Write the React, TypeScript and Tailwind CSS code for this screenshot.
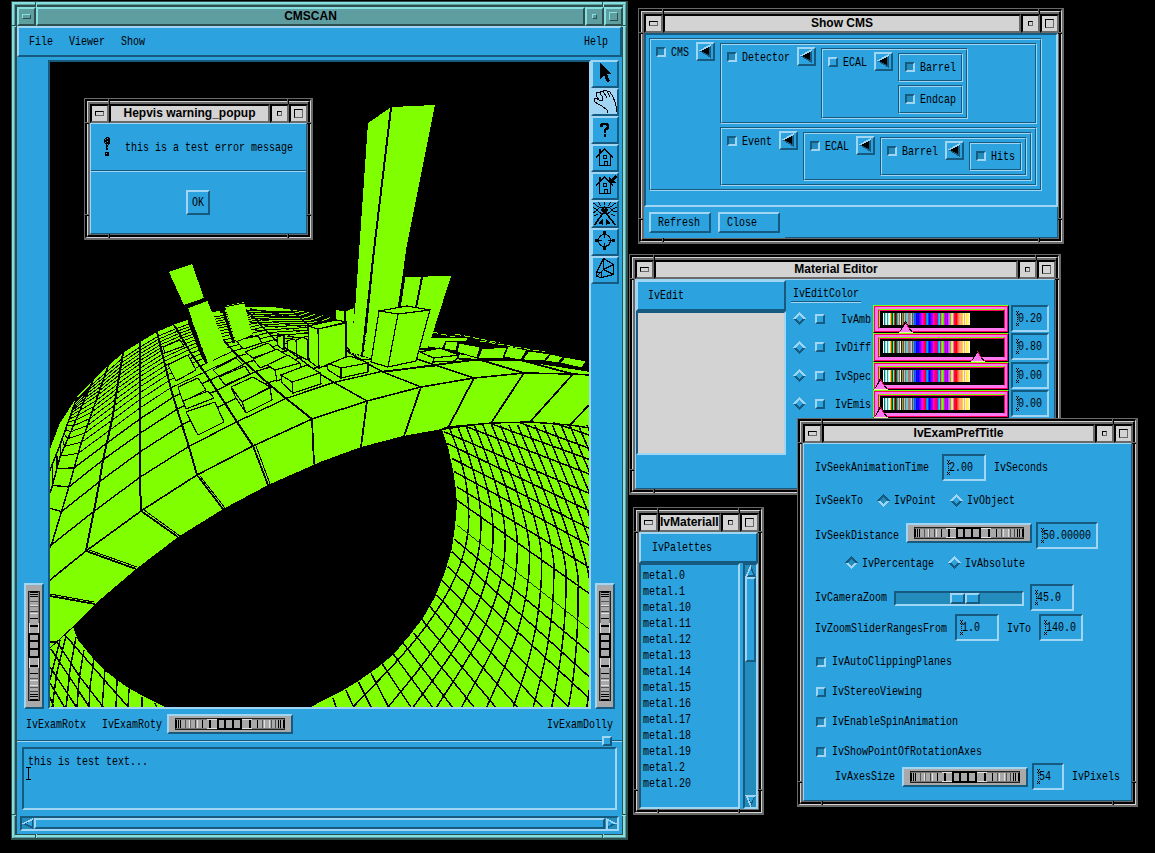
import React from "react";

type Pt = [number, number];
type Kids = { children?: React.ReactNode };

const raised = "border-2 border-t-[#a0d6f4] border-l-[#a0d6f4] border-b-[#165a80] border-r-[#165a80]";
const sunken = "border-2 border-t-[#165a80] border-l-[#165a80] border-b-[#a0d6f4] border-r-[#a0d6f4]";

/* Terminal-style label: six pixels per character. */
function T({ s, className = "" }: { s: string; className?: string }) {
  return (
    <span className={"block h-[13px] shrink-0 whitespace-pre " + className} style={{ width: s.length * 6 }}>
      <span className="block w-max origin-left scale-x-[0.769] font-['Liberation_Mono',monospace] text-[13px] leading-[13px] text-black">
        {s}
      </span>
    </span>
  );
}

/* ---------- window frame ---------- */

function Notches({ teal }: { teal?: boolean }) {
  const v = teal ? "border-l-[#2f4f4f] border-r-[#86e0e0]" : "border-l-[#696969] border-r-black";
  const h = teal ? "border-t-[#2f4f4f] border-b-[#86e0e0]" : "border-t-[#696969] border-b-black";
  return (
    <>
      <i className={"absolute left-[23px] top-0 h-[5px] w-[2px] border-l border-r " + v} />
      <i className={"absolute right-[22px] top-0 h-[5px] w-[2px] border-l border-r " + v} />
      <i className={"absolute bottom-0 left-[23px] h-[4px] w-[2px] border-l border-r " + v} />
      <i className={"absolute bottom-0 right-[22px] h-[4px] w-[2px] border-l border-r " + v} />
      <i className={"absolute left-0 top-[23px] h-[2px] w-[4px] border-b border-t " + h} />
      <i className={"absolute right-0 top-[23px] h-[2px] w-[4px] border-b border-t " + h} />
      <i className={"absolute bottom-[22px] left-0 h-[2px] w-[4px] border-b border-t " + h} />
      <i className={"absolute bottom-[22px] right-0 h-[2px] w-[4px] border-b border-t " + h} />
    </>
  );
}

function Win({ title, pos, teal, left, children }: Kids & { title: string; pos: string; teal?: boolean; left?: boolean }) {
  const a = teal ? "border-[#2f4f4f]" : "border-[#696969]";
  const b = teal
    ? "border-t-[#86e0e0] border-l-[#86e0e0] border-b-[#5f9ea0] border-r-[#5f9ea0]"
    : "border-t-black border-l-black border-b-[#d3d3d3] border-r-[#d3d3d3]";
  const c = teal
    ? "border-t-[#5f9ea0] border-l-[#5f9ea0] border-b-[#86e0e0] border-r-[#86e0e0]"
    : "border-t-[#d3d3d3] border-l-[#d3d3d3] border-b-black border-r-black";
  const btn = teal
    ? "bg-[#5f9ea0] border-t-[#86e0e0] border-l-[#86e0e0] border-b-[#2f4f4f] border-r-[#2f4f4f]"
    : "bg-[#d3d3d3] border-t-black border-l-black border-b-[#696969] border-r-[#696969]";
  const cell = "flex h-[19px] w-[19px] shrink-0 items-center justify-center border-2 " + btn;
  return (
    <div className={"absolute border-b-2 border-l border-r-2 border-t " + a + " " + pos}>
      <div className={"h-full border-b border-l-2 border-r border-t-2 " + b}>
        <div className={"h-full border-b-2 border-l border-r-2 border-t " + c}>
          <div className={"flex h-full flex-col border-b border-l-2 border-r border-t-2 " + a}>
            <div className="-mr-px flex h-[19px] shrink-0">
              <div className={cell}>
                <i className={"h-[5px] w-[9px] border " + btn} />
              </div>
              <div
                className={
                  "flex h-[19px] min-w-0 flex-1 overflow-hidden whitespace-nowrap border-2 font-['Liberation_Sans',sans-serif] text-[12px] font-bold leading-[14px] text-black " +
                  (left ? "justify-start " : "justify-center ") + btn
                }
              >
                {title}
              </div>
              <div className={cell}>
                <i className={"h-[5px] w-[5px] border " + btn} />
              </div>
              <div className={cell}>
                <i className={"h-[9px] w-[9px] border " + btn} />
              </div>
            </div>
            <div className="flex min-h-0 flex-1 flex-col overflow-hidden bg-[#2ca2df]">{children}</div>
          </div>
        </div>
      </div>
      <Notches teal={teal} />
    </div>
  );
}

/* ---------- small widgets ---------- */

function Check({ on, className = "" }: { on?: boolean; className?: string }) {
  return <span className={"block h-[10px] w-[10px] shrink-0 " + (on ? sunken + " bg-[#238cbd] " : raised + " ") + className} />;
}

function Diamond({ on, className = "" }: { on?: boolean; className?: string }) {
  return (
    <svg className={"h-[13px] w-[13px] shrink-0 " + className} viewBox="0 0 13 13" shapeRendering="crispEdges">
      <path d="M0 6.5L6.5 0L13 6.5Z" fill={on ? "#165a80" : "#a0d6f4"} />
      <path d="M0 6.5L6.5 13L13 6.5Z" fill={on ? "#a0d6f4" : "#165a80"} />
      <path d="M3 6.5L6.5 3L10 6.5L6.5 10Z" fill={on ? "#238cbd" : "#2ca2df"} />
    </svg>
  );
}

function Field({ s, w }: { s: string; w: string }) {
  return (
    <div className={"flex h-[27px] shrink-0 items-center " + sunken + " " + w}>
      <svg className="ml-[3px] h-[15px] w-[3px] shrink-0" viewBox="0 0 3 15" shapeRendering="crispEdges">
        <path
          d="M0 0h1v1h-1zM2 0h1v1h-1zM1 1h1v1h-1zM0 3h1v1h-1zM2 3h1v1h-1zM1 2h1v1h-1zM1 4h1v1h-1zM1 6h1v1h-1zM1 8h1v1h-1zM1 10h1v1h-1zM0 12h1v1h-1zM2 12h1v1h-1zM1 13h1v1h-1zM0 14h1v1h-1zM2 14h1v1h-1z"
          fill="#000"
        />
      </svg>
      <T s={s} className="-ml-[1px]" />
    </div>
  );
}

const bars: [number, number, string][] = [
  [0, 2, "#000"], [3, 1, "#000"], [5, 1, "#000"], [10, 1, "#555"], [14, 1, "#e0e0e0"], [15, 1, "#666"],
  [20, 1, "#444"], [22, 1, "#e0e0e0"], [27, 1, "#000"], [34, 2, "#000"], [42, 2, "#000"], [49, 2, "#000"],
  [57, 2, "#000"], [65, 2, "#000"], [74, 2, "#000"], [82, 1, "#000"], [87, 1, "#555"], [89, 1, "#e0e0e0"],
  [94, 1, "#e0e0e0"], [96, 1, "#555"], [100, 1, "#444"], [103, 1, "#000"], [105, 1, "#000"], [108, 2, "#000"],
];

function Wheel({ vertical, className = "" }: { vertical?: boolean; className?: string }) {
  const art = (
    <>
      <rect x="0" y="0" width="110" height="12" fill="#222" />
      <rect x="1" y="1" width="108" height="10" fill="#777" />
      <rect x="1" y="2" width="108" height="8" fill="#a9a9a9" />
      <rect x="32" y="1" width="10" height="1" fill="#e0e0e0" />
      <rect x="67" y="1" width="10" height="1" fill="#e0e0e0" />
      <rect x="32" y="10" width="10" height="1" fill="#e0e0e0" />
      <rect x="67" y="10" width="10" height="1" fill="#e0e0e0" />
      <rect x="42" y="0" width="25" height="2" fill="#000" />
      <rect x="42" y="10" width="25" height="2" fill="#000" />
      {bars.map(([x, w, f]) => (
        <rect key={x} x={x} y="2" width={w} height="8" fill={f} />
      ))}
    </>
  );
  return vertical ? (
    <div className={"flex h-[126px] w-[20px] shrink-0 items-center justify-center bg-[#a9a9a9] " + raised + " " + className}>
      <svg className="h-[110px] w-[12px] shrink-0" viewBox="0 0 12 110" shapeRendering="crispEdges">
        <g transform="matrix(0 1 1 0 0 0)">{art}</g>
      </svg>
    </div>
  ) : (
    <div className={"flex h-[20px] w-[126px] shrink-0 items-center justify-center bg-[#a9a9a9] " + raised + " " + className}>
      <svg className="h-[12px] w-[110px] shrink-0" viewBox="0 0 110 12" shapeRendering="crispEdges">{art}</svg>
    </div>
  );
}

/* ---------- 3D scene ---------- */

const meridians: Pt[][] = [
  [[20, 520], [50, 470], [60, 445], [77, 397]],
  [[20, 575], [52, 487], [60, 457], [93, 380]],
  [[30, 590], [52, 543], [68, 490], [80, 447], [108, 366]],
  [[86, 551], [98, 490], [103, 460], [112, 420], [123, 353]],
  [[141, 511], [140, 480], [140, 342]],
  [[197, 475], [189, 447], [172, 393], [163, 357], [157, 332]],
  [[253, 446], [237, 422], [210, 380], [192, 355], [174, 325]],
  [[312, 419], [288, 400], [270, 385], [240, 358], [200, 316]],
  [[367, 401], [335, 383], [320, 374], [275, 340], [245, 308]],
  [[421, 387], [383, 372], [370, 365], [320, 335], [290, 309]],
  [[474, 378], [435, 365], [420, 360], [370, 338], [345, 316]],
];
const fractions = [
  1, 0.8, 0.65, 0.54, 0.455, 0.39, 0.34, 0.3, 0.265, 0.235, 0.205, 0.18, 0.155, 0.13, 0.11, 0.09, 0.07, 0.05, 0.03,
];

function along(line: Pt[], f: number): Pt {
  const top = line[line.length - 1][1];
  const y = top + (line[0][1] - top) * f;
  for (let i = 0; i < line.length - 1; i++) {
    const [x0, y0] = line[i];
    const [x1, y1] = line[i + 1];
    if (y <= y0 && y >= y1) return [x0 + ((x1 - x0) * (y0 - y)) / (y0 - y1 || 1), y];
  }
  return line[line.length - 1];
}
const str = (p: Pt[]) => p.map((q) => q[0].toFixed(1) + "," + q[1].toFixed(1)).join(" ");
const low = (x: number, y: number): string => (320 + x / 3).toFixed(1) + " " + (480 + y / 3).toFixed(1);

const ringEnds = [0, 100, 205, 280, 350, 425, 500, 580, 640, 695, 745, 800, 850, 900, 950, 1000, 1050, 1100];
const rings = ringEnds.map((xb, i) => {
  if (i === 0) return "";
  const mx = 410 + 36.5 * i;
  const my = 90 + 22 * i;
  const rx = 385 + 26 * (i - 1);
  const dx = Math.max(20, 90 - 8 * i);
  return `M${low(rx, -165)}C${low(rx + 35, -80)} ${low(mx, my - 110)} ${low(mx, my)}C${low(mx, my + (681 - my) * 0.45)} ${low(xb + dx, 681 - 95)} ${low(xb, 681)}`;
});
const spokes: [number, number, number, number][] = [
  [700, -172, 807, -135], [600, -172, 807, -95], [510, -170, 807, -62], [440, -160, 807, -18], [372, -145, 807, 40],
  [380, -110, 807, 92], [395, -65, 807, 145], [403, -25, 807, 195], [410, 20, 807, 262], [410, 60, 807, 340],
  [403, 177, 807, 517], [395, 215, 807, 590], [383, 260, 807, 655], [365, 300, 750, 685], [350, 345, 670, 685],
  [330, 380, 595, 685], [305, 418, 530, 685], [280, 458, 465, 685], [250, 490, 400, 685], [220, 522, 340, 685],
  [187, 552, 275, 685], [153, 580, 208, 685], [115, 605, 155, 685], [77, 630, 103, 685], [38, 653, 50, 685],
];
const ribs = [
  "M50 596L95 604", "M86 551L136 569", "M141 511L178 537", "M197 475L223 509", "M253 446L268 485", "M312 419L314 464",
  "M367 401L361 447", "M421 387L404 436", "M474 378L448 428", "M524 373L491 423", "M573 374L530 422", "M589 405L570 425",
];
const blocks: string[] = [
  "168,365 188,355 196,370 176,381", "178,387 198,378 206,390 183,402", "183,401 208,391 214,398 186,409",
  "186,412 215,402 224,422 198,435", "163,347 180,340 184,346 165,353", "213,370 236,358 243,365 219,376",
  "219,377 245,366 250,374 225,385", "231,387 253,377 270,387 242,402", "242,402 270,388 272,400 246,413",
  "231,387 242,402 246,413 236,398",
  "236,340 258,336 262,343 243,349", "245,352 268,343 276,350 253,358", "253,359 277,349 288,356 260,368",
  "267,365 288,355 300,363 275,370", "275,370 300,363 302,372 277,381", "281,375 307,365 320,373 292,382",
  "292,382 320,373 321,384 293,393", "281,375 292,382 293,393 282,383", "327,363 350,356 368,363 341,368",
  "341,368 368,363 368,372 341,378", "327,363 341,368 341,378 328,370", "287,341 293,339 297,341 297,354 288,350",
  "296,340 303,337 308,340 308,360 297,355", "277,337 284,335 284,350 278,346",
  "420,352 440,348 459,355 434,358", "434,358 459,355 455,361 433,362",
];
const shelf: string[] = [
  "430,337 468,338 466,342 446,341 442,349 428,347", "446,341 458,341 456,351 444,349", "459,343 480,347 477,358 457,352",
  "482,349 507,347 503,358 478,358", "508,346 527,350 521,360 504,357", "529,351 550,354 544,361 522,360",
  "551,354 563,357 558,363 545,361", "565,357 586,361 582,368 560,363",
];

function Scene() {
  const rim: Pt[] = [[50, 580], ...meridians.slice(3).map((m) => m[0]), [524, 373], [573, 374], [590, 375]];
  return (
    <svg className="h-[646px] w-[540px] shrink-0 bg-black" viewBox="50 62 540 646" shapeRendering="crispEdges">
      <g fill="#7fff00" stroke="none">
        <path d="M50 449L60 423L77 397L93 380L108 366L123 353L140 342L157 332L173 325L187 320L213 312L247 307L273 307L307 312L330 317L360 330L400 350L433 350L477 357L560 362L590 371V428L570 425L530 422L492 423L448 427L442 429L403 436L361 447L320 462L268 485L223 509L178 537L136 569L95 604L73 627L50 648Z" />
        <path d="M442 430L448 447L453 470L456 490L457 505L455 527L452 548L445 572L435 597L423 618L410 635L393 655L377 668L357 682L340 692L320 702L310 708H590V428L570 425L530 422L492 423Z" />
        <path d="M50 648L73 627L78 640L92 657L103 669L117 680L130 689L147 698L167 708H50Z" />
      </g>
      <g fill="none" stroke="#000">
        {fractions.map((f, i) =>
          i === 0 ? null : <polyline key={f} points={str(meridians.map((m) => along(m, f)))} strokeWidth={i < 5 ? 1.4 : 1} />
        )}
        {meridians.map((m, i) => (
          <polyline key={i} points={str(m)} strokeWidth={i > 2 && i < 8 ? 2 : 1.5} />
        ))}
        <polyline points={str(rim)} strokeWidth="1.6" />
        {ribs.map((d) => (
          <path key={d} d={d} strokeWidth="1.8" />
        ))}
        <path d="M383 372L435 365L477 359.500L520 360L590 371M477 359L524 373M520 360L573 374" strokeWidth="1.800" />
        <path d="M220 312L330 319M250 309L330 323M240 316L310 328M250 322L308 333M255 330L300 338" strokeDasharray="7 4" strokeWidth="1.500" />
        <path d="M200 476L225 508M144 510L180 536M89 550L137 567M50 594L94 602M256 446L270 484" strokeWidth="1" />
      </g>
      <g fill="none" stroke="#000" strokeWidth="1.500">
        <path d="M442 429L448 427L492 423L530 422L570 425L590 428" />
        {rings.map((d, i) => (d ? <path key={i} d={d} /> : null))}
        {spokes.map(([a, b, c, d], i) => (
          <path key={i} d={`M${low(a, b)}L${low(c, d)}`} />
        ))}
        <path d="M457 525L589 629" strokeWidth=".8" />
        <path d="M73 627L50 648" strokeWidth="1" />
        <path d="M50 642H57M57 642L80 677L104 708M65 635L93 667L129 708M51 649L90 708M50 667L77 708M50 683L65 708M50 697L54 708" />
        <path d="M66 636L57 672L52 708M76 637L70 670L66 708M84 650L79 680L77 708M94 658L90 687L89 708M105 669L102 708M117 680L116 708M129 689L128 708M142 697V708M155 703L157 708M60 640L50 680" />
      </g>
      <path d="M428 330L590 361V371L520 360L428 350Z" fill="#000" />
      <g fill="#7fff00" stroke="#000" strokeWidth="1">
        {shelf.map((p) => (
          <polygon key={p} points={p} />
        ))}
      </g>
      <g fill="none" stroke="#7fff00" strokeWidth="1">
        <path d="M432 332L455 337M455 334L500 343M480 341L545 352" strokeDasharray="6 3" />
      </g>
      <path d="M428 356L477 360L520 360L560 364L590 371" stroke="#000" strokeWidth="2" fill="none" />
      <g fill="#7fff00" stroke="#000" strokeWidth="1.200">
        {blocks.map((p) => (
          <polygon key={p} points={p} />
        ))}
        <polygon points="335,309 345,311 355,307 352,354 335,330" />
        <path d="M345 311V354" />
        <polygon points="308,326 336,320 347,322 318,329" />
        <polygon points="308,326 318,329 319,368 309,361" />
        <polygon points="318,329 346,323 346,357 319,368" />
      </g>
      <path d="M187 307L190 322L203 356L208 363" stroke="#000" strokeWidth="4" fill="none" />
      <path d="M222 307L234 343" stroke="#000" strokeWidth="3" fill="none" />
      <g fill="#7fff00">
        <polygon points="169,272 192,264 204,298 184,305" />
        <polygon points="188,308 207,300 228,352 208,363" />
        <polygon points="225,306 244,302 252,335 236,342" />
        <polygon points="404,277 451,276 428,348 395,350" />
        <polygon points="368,123 390,108 373,250 361,357 350,353 355,310" />
        <polygon points="392,107 435,105 406,250 398,310 372,358 364,357 375,250" />
      </g>
      <g fill="none" stroke="#000">
        <path d="M183 306L204 298.500" strokeWidth="1" />
        <path d="M185 309L207 300.500" strokeWidth="1" />
        <path d="M223 305L244 301M224 307L244 303M236 342L253 335" strokeWidth="1" />
        <path d="M391 108L374 250L362 357" strokeWidth="2" />
        <path d="M437 105L408 250L399 309" strokeWidth="3" />
        <path d="M422 277L416 308" strokeWidth="2" />
        <path d="M346 351L371 359" strokeWidth="1" strokeDasharray="2 1" />
      </g>
      <g fill="#7fff00" stroke="#000" strokeWidth="1.200">
        <polygon points="379,311 407,306 430,310 398,314" />
        <polygon points="379,311 398,314 388,367 371,362" />
        <polygon points="398,314 430,310 416,361 388,367" />
      </g>
    </svg>
  );
}

/* ---------- viewer toolbar ---------- */

const house = (
  <>
    <path d="M3 11.500L11.500 3L20 11.500M6.500 9V19.500H17.500V9" fill="none" stroke="#000" strokeWidth="1.300" />
    <path d="M6 3H8V8H6ZM10 9H14V13H10ZM11 15H15V20H11Z" fill="#000" />
    <path d="M11 10H13V12H11ZM12 16H14V19H12Z" fill="#2ca2df" />
  </>
);
const icons: React.ReactNode[] = [
  <path key="a" d="M7 1V17L11 13L14 20L17 19L14 12H18Z" fill="#000" />,
  <path
    key="b"
    d="M15 23L14 20L9 16L5 14L2 12L1 9L3 8L6 10L9 11M6 10L4 7L3 3L5 2L7 3L10 8M7 3L8 1H10L14 8M10 1L12 0L14 1L17 7M14 1L17 2L20 7L22 12L23 16L24 22M9 11L10 8"
    fill="none" stroke="#000" strokeWidth="1"
  />,
  <path key="c" d="M8.500 9V7L10 6H13.500L15 7.500V9.500L12 12V14.500M12 16V19" fill="none" stroke="#000" strokeWidth="2.500" />,
  <g key="d">{house}</g>,
  <g key="e">{house}<path d="M16 9V3L18.500 5L22 1L24 3L20.500 6.500L23 9Z" fill="#000" /></g>,
  <g key="f" fill="none" stroke="#000" strokeWidth="1" transform="translate(-1.500 -1)">
    <path d="M5 9L9 6H17L21 9L17 12H9ZM10 9L13 6L16 9L13 12Z" />
    <path d="M12 8h3v3h-3z" fill="#000" />
    <path d="M2 2L7 6M7 1L9 5M13 1V4M19 1L17 5M24 2L19 6M1 6L4 8M25 6L22 8M2 12L4 10M25 11L22 10M6 13L3 15M20 13L23 15" />
    <path d="M11 13L3 24M15 13L24 24" strokeWidth="1.600" />
    <path d="M8 22L11 19V23ZM18 22L15 19V23Z" fill="#000" />
  </g>,
  <g key="g" fill="none" stroke="#000" strokeWidth="1.200" transform="translate(-1.500 -2)">
    <circle cx="13" cy="12.500" r="6" />
    <path d="M13 3V10M13 15V22M4 12.500H10M16 12.500H22" />
    <path d="M11.500 3h3v3h-3zM11.500 19h3v3h-3zM3.500 11h3v3h-3zM20 11h3v3h-3z" fill="#000" stroke="none" />
  </g>,
  <path
    key="h" transform="translate(-.5 -1.500)"
    d="M11 2L4 16V20L9 21L21 18V8ZM11 2L11 13L21 18M11 13L21 8M11 13L4 20M4 16H9V21" fill="none" stroke="#000" strokeWidth="1.100"
  />,
];

function Toolbar() {
  return (
    <div className="flex w-[28px] flex-col">
      {icons.map((icon, i) => (
        <div key={i} className={"h-[28px] w-[28px] " + raised + (i === 1 ? " bg-[#a0d6f4]" : "")}>
          <svg className="h-[24px] w-[24px]" viewBox="0 0 24 24" shapeRendering="crispEdges">{icon}</svg>
        </div>
      ))}
    </div>
  );
}

function Viewer() {
  return (
    <Win title="CMSCAN" pos="left-[11px] top-[1px] h-[839px] w-[617px]" teal>
      <div className={"flex h-[31px] shrink-0 items-center pl-[10px] pr-[12px] " + raised}>
        <T s="File" />
        <T s="Viewer" className="ml-[16px]" />
        <T s="Show" className="ml-[16px]" />
        <T s="Help" className="ml-auto" />
      </div>
      <div className="flex h-[652px] shrink-0 pt-[3px]">
        <div className="flex w-[31px] shrink-0 items-end pl-[7px]">
          <Wheel vertical />
        </div>
        <div className={"h-[649px] w-[543px] shrink-0 overflow-hidden " + sunken}>
          <Scene />
        </div>
        <div className="flex flex-1 flex-col justify-between">
          <Toolbar />
          <Wheel vertical className="ml-[4px]" />
        </div>
      </div>
      <div className="flex h-[31px] shrink-0 items-center pl-[9px] pr-[9px]">
        <T s="IvExamRotx" />
        <T s="IvExamRoty" className="ml-[16px]" />
        <Wheel className="-mt-[2px] ml-[5px]" />
        <T s="IvExamDolly" className="ml-auto" />
      </div>
      <div className="relative h-[2px] shrink-0 border-b border-t border-b-[#a0d6f4] border-t-[#165a80]">
        <span className={"absolute -top-[5px] right-[10px] h-[10px] w-[10px] bg-[#2ca2df] " + raised} />
      </div>
      <div className={"ml-[5px] mr-[5px] mt-[5px] h-[63px] shrink-0 pl-[4px] pt-[6px] " + sunken}>
        <T s="this is test text..." />
        <svg className="-ml-[2px] -mt-px h-[13px] w-[5px]" viewBox="0 0 5 13" shapeRendering="crispEdges">
          <path d="M0 0H5V1H3V12H5V13H0V12H2V1H0Z" fill="#000" />
        </svg>
      </div>
      <div className={"ml-[3px] mr-[3px] mt-[6px] flex h-[15px] shrink-0 bg-[#238cbd] " + sunken}>
        <svg className="h-[11px] w-[12px] shrink-0" viewBox="0 0 12 11" shapeRendering="crispEdges">
          <path d="M0 5.500L11 0V11Z" fill="#165a80" />
          <path d="M0 5.500L11 0V2L3 5.500Z" fill="#a0d6f4" />
          <path d="M4 5.500L10 2.500V8.500Z" fill="#2ca2df" />
        </svg>
        <div className={"flex-1 bg-[#2ca2df] " + raised} />
        <svg className="h-[11px] w-[12px] shrink-0" viewBox="0 0 12 11" shapeRendering="crispEdges">
          <path d="M1 0L12 5.500L1 11Z" fill="#165a80" />
          <path d="M1 11V0L12 5.500L9 6L3 3V11Z" fill="#a0d6f4" />
          <path d="M3 2.500L8 5.500L3 8.500Z" fill="#2ca2df" />
        </svg>
      </div>
    </Win>
  );
}

function Warning() {
  return (
    <Win title="Hepvis warning_popup" pos="left-[84px] top-[98px] h-[142px] w-[229px]">
      <div className="flex flex-1 flex-col border border-b-[#165a80] border-l-[#a0d6f4] border-r-[#165a80] border-t-[#a0d6f4]">
        <div className="flex h-[46px] items-center pl-[12px]">
          <svg className="h-[20px] w-[8px]" viewBox="0 0 8 20" shapeRendering="crispEdges">
            <path d="M3 0H5L7 2V6L5 8V13H3V8L1 6V2ZM2 15H6V19H2Z" fill="#000" />
            <path d="M2.500 2V12M4.500 1V12M3.500 16V19" stroke="#2ca2df" strokeDasharray="1 2" />
          </svg>
          <T s="this is a test error message" className="ml-[14px]" />
        </div>
        <div className="h-[2px] border-b border-t border-b-[#a0d6f4] border-t-[#165a80]" />
        <div className="flex flex-1 items-start justify-center pr-[2px] pt-[18px]">
          <div className={"flex h-[25px] w-[24px] items-center justify-center " + raised}>
            <T s="OK" />
          </div>
        </div>
      </div>
    </Win>
  );
}

/* ---------- Show CMS ---------- */

type TreeNode = { name: string; off?: boolean; kids?: TreeNode[] };
const tree: TreeNode = {
  name: "CMS",
  kids: [
    { name: "Detector", kids: [{ name: "ECAL", off: true, kids: [{ name: "Barrel" }, { name: "Endcap" }] }] },
    { name: "Event", kids: [{ name: "ECAL", kids: [{ name: "Barrel", kids: [{ name: "Hits" }] }] }] },
  ],
};

function Node({ node }: { node: TreeNode }) {
  return (
    <div className="border border-b-[#a0d6f4] border-l-[#165a80] border-r-[#a0d6f4] border-t-[#165a80]">
      <div className="flex h-full items-start border border-b-[#165a80] border-l-[#a0d6f4] border-r-[#165a80] border-t-[#a0d6f4]">
        <Check on={!node.off} className="ml-[5px] mt-[7px]" />
        <T s={node.name} className={"ml-[5px] mt-[6px] " + (node.kids ? "" : "mb-[6px] mr-[5px]")} />
        {node.kids && (
          <>
            <div className={"ml-[7px] mt-[2px] h-[19px] w-[19px] shrink-0 " + raised}>
              <svg className="h-[15px] w-[15px]" viewBox="0 0 15 15" shapeRendering="crispEdges">
                <path d="M1 7L13 0V14Z" fill="#165a80" />
                <path d="M0 7L13 0V2L4 7Z" fill="#a0d6f4" />
                <path d="M3 7L11 3V11Z" fill="#000" />
              </svg>
            </div>
            <div className="mb-[3px] ml-[5px] mr-[3px] mt-[3px] flex flex-col gap-[3px]">
              {node.kids.map((k) => (
                <Node key={k.name} node={k} />
              ))}
            </div>
          </>
        )}
      </div>
    </div>
  );
}

function ShowCms() {
  return (
    <Win title="Show CMS" pos="left-[638px] top-[8px] h-[236px] w-[426px]">
      <div className={"flex h-[174px] shrink-0 items-start pl-[3px] pt-[3px] " + sunken}>
        <Node node={tree} />
      </div>
      <div className="flex flex-1 items-start gap-[7px] border-r border-r-[#165a80] pl-[5px] pt-[5px]">
        <div className={"flex h-[21px] w-[62px] items-center pl-[7px] " + raised}>
          <T s="Refresh" />
        </div>
        <div className={"flex h-[21px] w-[62px] items-center pl-[7px] " + raised}>
          <T s="Close" />
        </div>
        <div className="-ml-[2px] h-px flex-1 self-end bg-[#165a80]" />
      </div>
    </Win>
  );
}

/* ---------- Material Editor ---------- */

const spectrum = [
  "#000", "#fff", "#555", "#5ff", "#fff", "#2aa", "#9ff", "#fff", "#fc2", "#a50", "#052", "#5fa", "#c24", "#030", "#063", "#888",
  "#bbb", "#777", "#ffc", "#222", "#f62", "#084", "#9cc", "#777", "#aaa", "#4dd", "#888", "#c66", "#999", "#ccc", "#366", "#88a",
  "#24f", "#06f", "#00f", "#20f", "#00f", "#50f", "#80f", "#c0f", "#f0f", "#f0a", "#f06", "#f00", "#08f", "#0af", "#04f", "#00f",
  "#40f", "#80f", "#a0d", "#f0f", "#f09", "#f04", "#f03", "#a0f", "#0af", "#0df", "#e0c", "#8c0", "#7f0", "#5d2", "#f0f", "#90c",
  "#c0f", "#80f", "#b5f", "#e6d", "#c84", "#af6", "#cf6", "#f6c", "#f06", "#f03", "#f00", "#f42", "#f80", "#f8c", "#fb3", "#f9a",
  "#fc4", "#ffa", "#f9c", "#ff8", "#fd6", "#ff3", "#fe9", "#ffb",
];

function Scale({ at, h }: { at: number; h: string }) {
  return (
    <div className={"relative w-[136px] shrink-0 border border-b-black border-l-[#7fff00] border-r-black border-t-[#7fff00] " + h}>
      <div className="h-full border border-[#ff0060]">
        <div className="h-full border-[2px] border-l-[3px] border-[#ff78f0]">
          <div className="h-full border border-b-[#ff78f0] border-l-[#ff0060] border-r-[#ff0060] border-t-[#7fff00]">
            <div className="h-full border border-b-black border-l-[#7fff00] border-r-black border-t-[#ff0060] bg-black pt-[2px]">
              <svg className="ml-[2px] h-[12px] w-[88px]" viewBox="0 0 88 12" shapeRendering="crispEdges">
                {spectrum.map((c, i) => (
                  <rect key={i} x={i} y="0" width="1" height="12" fill={c} />
                ))}
              </svg>
            </div>
          </div>
        </div>
      </div>
      <svg className="absolute -bottom-px h-[12px] w-[14px]" style={{ left: at - 8 }} viewBox="0 0 14 12" shapeRendering="crispEdges">
        <path d="M0 12L6 0L7 0L14 12Z" fill="#000" />
        <path d="M6 0L13 11L7 4Z" fill="#ff0060" />
        <path d="M1 11L6.500 2.500L12 11Z" fill="#ff78f0" />
        <path d="M0 11H14" stroke="#e8f8b0" />
      </svg>
    </div>
  );
}

function MaterialEditor() {
  const rows: [string, string, number, string][] = [
    ["IvAmb", "0.20", 33, "h-[28px]"],
    ["IvDiff", "0.80", 105, "h-[29px]"],
    ["IvSpec", "0.00", 8, "h-[28px]"],
    ["IvEmis", "0.00", 8, "h-[28px]"],
  ];
  return (
    <Win title="Material Editor" pos="left-[629px] top-[254px] h-[241px] w-[432px]">
      <div className="flex flex-1 border border-b-[#165a80] border-l-[#a0d6f4] border-r-[#165a80] border-t-[#a0d6f4]">
        <div className="flex w-[150px] shrink-0 flex-col">
          <div className={"flex h-[31px] items-center pl-[10px] " + raised}>
            <T s="IvEdit" />
          </div>
          <div className={"h-[144px] bg-[#d3d3d3] " + sunken} />
        </div>
        <div className="ml-[5px] flex flex-1 flex-col pt-[7px]">
          <T s="IvEditColor" className="ml-[2px]" />
          <div className="mt-px h-[2px] w-[70px] border-b border-t border-b-[#a0d6f4] border-t-[#165a80]" />
          <div className="mt-[2px] flex flex-col">
            {rows.map(([name, value, at, h]) => (
              <div key={name} className={"flex items-center " + h}>
                <Diamond className="-mt-px ml-[2px]" />
                <Check className="-mt-px ml-[9px]" />
                <span className="flex w-[46px] shrink-0 justify-end">
                  <T s={name} />
                </span>
                <div className="ml-[2px] flex items-start">
                  <Scale at={at} h={h} />
                  <span className="ml-[2px] block">
                    <Field s={value} w="w-[38px]" />
                  </span>
                </div>
              </div>
            ))}
          </div>
        </div>
      </div>
    </Win>
  );
}

/* ---------- Material palette list ---------- */

const metals = ["0", "1", "10", "11", "12", "13", "14", "15", "16", "17", "18", "19", "2", "20"];

function MaterialList() {
  return (
    <Win title="IvMaterialI" pos="left-[633px] top-[507px] h-[308px] w-[131px]" left>
      <div className={"flex h-[31px] shrink-0 items-center pl-[11px] " + raised}>
        <T s="IvPalettes" />
      </div>
      <div className="flex min-h-0 flex-1">
        <div className={"w-[101px] shrink-0 pl-[2px] pt-[2px] " + sunken}>
          {metals.map((m) => (
            <div key={m} className="flex h-[16px] items-center">
              <T s={"metal." + m} />
            </div>
          ))}
        </div>
        <div className={"ml-[3px] flex w-[15px] flex-col bg-[#238cbd] " + sunken}>
          <svg className="h-[12px] w-[11px] shrink-0" viewBox="0 0 11 12" shapeRendering="crispEdges">
            <path d="M5.500 0L11 12H0Z" fill="#165a80" />
            <path d="M5.500 0L0 12H2L6 4Z" fill="#a0d6f4" />
            <path d="M5.500 4L8.500 10H2.500Z" fill="#2ca2df" />
          </svg>
          <div className={"h-[85px] shrink-0 bg-[#2ca2df] " + raised} />
          <svg className="mt-auto h-[12px] w-[11px] shrink-0" viewBox="0 0 11 12" shapeRendering="crispEdges">
            <path d="M0 0H11L5.500 12Z" fill="#165a80" />
            <path d="M0 0H11L10 2H3L6 9L5.500 12Z" fill="#a0d6f4" />
            <path d="M3 2H9L6 8Z" fill="#2ca2df" />
          </svg>
        </div>
      </div>
    </Win>
  );
}

/* ---------- Examiner preferences ---------- */

function Row({ children, className = "" }: Kids & { className?: string }) {
  return <div className={"flex shrink-0 items-center " + className}>{children}</div>;
}

function ExamPrefs() {
  return (
    <Win title="IvExamPrefTitle" pos="left-[797px] top-[418px] h-[389px] w-[341px]">
      <div className="flex flex-1 flex-col border border-b-[#165a80] border-l-[#a0d6f4] border-r-[#165a80] border-t-[#a0d6f4] pl-[11px] pt-[10px]">
        <Row className="h-[27px]">
          <T s="IvSeekAnimationTime" />
          <span className="ml-[13px]"><Field s="2.00" w="w-[44px]" /></span>
          <T s="IvSeconds" className="ml-[8px]" />
        </Row>
        <Row className="mt-[6px] h-[27px]">
          <T s="IvSeekTo" />
          <Diamond on className="ml-[14px]" />
          <T s="IvPoint" className="ml-[4px]" />
          <Diamond className="ml-[14px]" />
          <T s="IvObject" className="ml-[4px]" />
        </Row>
        <Row className="mt-[8px] h-[27px]">
          <T s="IvSeekDistance" />
          <Wheel className="-mt-[5px] ml-[7px]" />
          <span className="ml-[4px]"><Field s="50.00000" w="w-[62px]" /></span>
        </Row>
        <Row className="mt-[1px] h-[27px] pl-[30px]">
          <Diamond on className="-mt-[2px]" />
          <T s="IvPercentage" className="ml-[4px]" />
          <Diamond className="-mt-[2px] ml-[14px]" />
          <T s="IvAbsolute" className="ml-[4px]" />
        </Row>
        <Row className="mt-[7px] h-[27px]">
          <T s="IvCameraZoom" />
          <div className={"ml-[7px] mt-[2px] flex h-[15px] w-[130px] shrink-0 bg-[#238cbd] pl-[54px] " + sunken}>
            <div className={"h-[11px] w-[15px] bg-[#2ca2df] " + raised} />
            <div className={"h-[11px] w-[15px] bg-[#2ca2df] " + raised} />
          </div>
          <span className="ml-[6px]"><Field s="45.0" w="w-[44px]" /></span>
        </Row>
        <Row className="mt-[3px] h-[27px]">
          <T s="IvZoomSliderRangesFrom" className="mt-[2px]" />
          <span className="ml-[8px]"><Field s="1.0" w="w-[44px]" /></span>
          <T s="IvTo" className="ml-[8px] mt-[2px]" />
          <span className="ml-[8px]"><Field s="140.0" w="w-[44px]" /></span>
        </Row>
        <Row className="mt-[9px] h-[23px]">
          <Check on className="ml-[1px]" />
          <T s="IvAutoClippingPlanes" className="ml-[6px]" />
        </Row>
        <Row className="mt-[7px] h-[23px]">
          <Check className="ml-[1px]" />
          <T s="IvStereoViewing" className="ml-[6px]" />
        </Row>
        <Row className="mt-[7px] h-[23px]">
          <Check on className="ml-[1px]" />
          <T s="IvEnableSpinAnimation" className="ml-[6px]" />
        </Row>
        <Row className="mt-[7px] h-[23px]">
          <Check on className="ml-[1px]" />
          <T s="IvShowPointOfRotationAxes" className="ml-[6px]" />
        </Row>
        <Row className="h-[27px] pl-[20px]">
          <T s="IvAxesSize" />
          <Wheel className="ml-[7px]" />
          <span className="ml-[4px]"><Field s="54" w="w-[32px]" /></span>
          <T s="IvPixels" className="ml-[8px]" />
        </Row>
      </div>
    </Win>
  );
}

export default function App() {
  return (
    <div className="relative h-[853px] w-[1155px] overflow-hidden bg-black">
      <Viewer />
      <Warning />
      <ShowCms />
      <MaterialEditor />
      <MaterialList />
      <ExamPrefs />
    </div>
  );
}
